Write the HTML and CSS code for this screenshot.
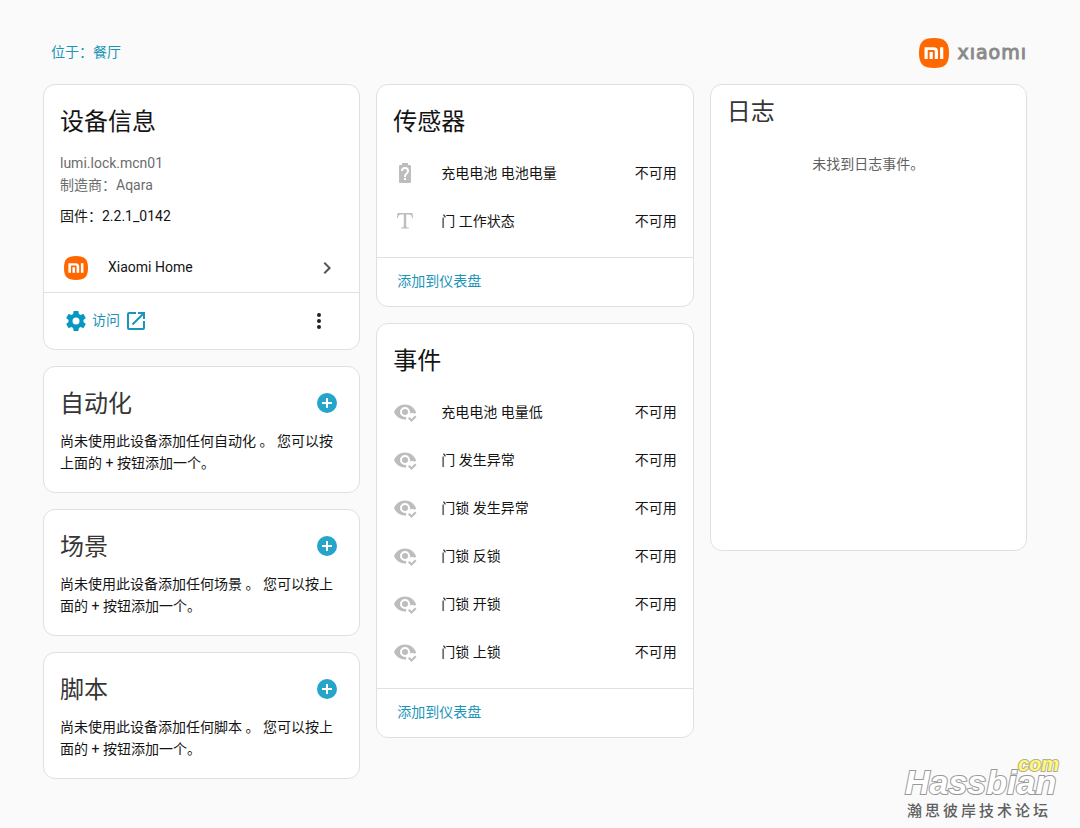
FILE: index.html
```html
<!DOCTYPE html>
<html lang="zh-CN">
<head>
  <meta charset="UTF-8" />
  <meta name="viewport" content="width=device-width, initial-scale=1.0"/>
  <title>设备信息</title>
  <link rel="stylesheet" href="styles.css">
</head>
<body>
  <!-- shared icons -->
  <svg class="sprite" aria-hidden="true">
    <symbol id="mi" viewBox="0 0 30 30">
      <path fill="#ff6700" d="M15 0C4 0 0 4 0 15s4 15 15 15 15-4 15-15S26 0 15 0z"/>
      <path fill="#fff" d="M5.500 9.200h9c3 0 4.500 1.500 4.500 4.300v7.500h-3.200v-7.300c0-1.200-.5-1.800-1.800-1.800H8.700v9.100H5.500zM10.600 14h3.200v7h-3.200zM21.100 9.200h3.200V21h-3.200z"/>
    </symbol>
    <symbol id="plus" viewBox="0 0 24 24">
      <path d="M17 13h-4v4h-2v-4H7v-2h4V7h2v4h4m-5-9A10 10 0 0 0 2 12a10 10 0 0 0 10 10 10 10 0 0 0 10-10A10 10 0 0 0 12 2z"/>
    </symbol>
    <symbol id="eye-check" viewBox="0 0 24 24">
      <path d="M23.500 17l-5 5-3.500-3.500 1.500-1.500 2 2 3.500-3.500 1.500 1.500M12 9a3 3 0 0 1 3 3 3 3 0 0 1-3 3 3 3 0 0 1-3-3 3 3 0 0 1 3-3m0 8c.5 0 .97-.07 1.420-.21-.27.710-.42 1.430-.42 2.210v.45l-1 .05c-5 0-9.270-3.110-11-7.500C2.730 7.610 7 4.500 12 4.500s9.270 3.110 11 7.500c-.25.640-.56 1.260-.92 1.850-.9-.54-1.960-.85-3.080-.85-.78 0-1.500.15-2.210.420.140-.45.210-.92.210-1.420a5 5 0 0 0-5-5 5 5 0 0 0-5 5 5 5 0 0 0 5 5z"/>
    </symbol>
  </svg>

  <div class="page">
    <header class="header">
      <a class="area" href="#">位于：餐厅</a>
      <div class="brand">
        <svg class="brand-mark"><use href="#mi"/></svg>
        <span class="brand-name" aria-label="xiaomi">xıaomı</span>
      </div>
    </header>

    <main class="columns">
      <div class="column">
        <section class="card">
          <h1 class="title">设备信息</h1>
          <div class="info">
            <div>lumi.lock.mcn01</div>
            <div>制造商：Aqara</div>
            <div class="firmware">固件：2.2.1_0142</div>
          </div>
          <a class="integration" href="#">
            <svg class="icon"><use href="#mi"/></svg>
            <span>Xiaomi Home</span>
            <svg class="icon chevron" viewBox="0 0 24 24"><path d="M8.590 16.580L13.170 12 8.590 7.410 10 6l6 6-6 6-1.410-1.420z"/></svg>
          </a>
          <div class="actions">
            <a class="visit" href="#">
              <svg class="icon gear" viewBox="0 0 24 24"><path d="M12 15.500A3.500 3.500 0 0 1 8.500 12 3.500 3.500 0 0 1 12 8.500a3.500 3.500 0 0 1 3.500 3.500 3.500 3.500 0 0 1-3.500 3.500m7.430-2.530c.04-.32.07-.64.07-.97s-.03-.66-.07-1l2.110-1.630c.19-.15.24-.42.12-.64l-2-3.460c-.12-.22-.39-.31-.61-.22l-2.490 1c-.52-.39-1.060-.73-1.690-.98l-.37-2.650A.506.506 0 0 0 14 2h-4c-.25 0-.46.18-.5.42l-.37 2.650c-.63.25-1.170.59-1.690.98l-2.490-1c-.22-.09-.49 0-.61.22l-2 3.460c-.13.22-.07.49.12.64L4.570 11c-.04.34-.07.67-.07 1s.03.65.07.97l-2.110 1.660c-.19.15-.25.42-.12.64l2 3.460c.12.22.39.3.61.22l2.490-1.010c.52.4 1.060.74 1.690.99l.37 2.650c.04.24.25.42.5.42h4c.25 0 .46-.18.5-.42l.37-2.650c.63-.26 1.170-.59 1.690-.99l2.490 1.010c.22.08.49 0 .61-.22l2-3.460c.12-.22.07-.49-.12-.64l-2.110-1.660z"/></svg>
              <span>访问</span>
              <svg class="icon" viewBox="0 0 24 24"><path d="M14 3v2h3.590l-9.830 9.830 1.410 1.410L19 6.410V10h2V3m-2 16H5V5h7V3H5a2 2 0 0 0-2 2v14a2 2 0 0 0 2 2h14a2 2 0 0 0 2-2v-7h-2v7z"/></svg>
            </a>
            <button class="menu" aria-label="更多">
              <svg class="icon" viewBox="0 0 24 24"><path d="M12 16a2 2 0 1 1 0 4 2 2 0 0 1 0-4m0-6a2 2 0 1 1 0 4 2 2 0 0 1 0-4m0-6a2 2 0 1 1 0 4 2 2 0 0 1 0-4z"/></svg>
            </button>
          </div>
        </section>

        <section class="card">
          <div class="title-row">
            <h1 class="title soft">自动化</h1>
            <button class="add" aria-label="添加自动化"><svg class="icon"><use href="#plus"/></svg></button>
          </div>
          <p class="hint">尚未使用此设备添加任何自动化 。 您可以按上面的 + 按钮添加一个。</p>
        </section>

        <section class="card">
          <div class="title-row">
            <h1 class="title soft">场景</h1>
            <button class="add" aria-label="添加场景"><svg class="icon"><use href="#plus"/></svg></button>
          </div>
          <p class="hint">尚未使用此设备添加任何场景 。 您可以按上面的 + 按钮添加一个。</p>
        </section>

        <section class="card">
          <div class="title-row">
            <h1 class="title soft">脚本</h1>
            <button class="add" aria-label="添加脚本"><svg class="icon"><use href="#plus"/></svg></button>
          </div>
          <p class="hint">尚未使用此设备添加任何脚本 。 您可以按上面的 + 按钮添加一个。</p>
        </section>
      </div>

      <div class="column">
        <section class="card">
          <h1 class="title">传感器</h1>
          <ul class="entities">
            <li>
              <svg class="icon" viewBox="0 0 24 24"><path d="M15.070 12.250l-.9.920C13.450 13.890 13 14.500 13 16h-2v-.5c0-1.110.45-2.110 1.170-2.830l1.240-1.260c.37-.36.590-.86.590-1.410a2 2 0 0 0-4 0H8a4 4 0 0 1 8 0c0 .88-.36 1.670-.93 2.250M13 19h-2v-2h2M16.670 4H15V2H9v2H7.330A1.330 1.330 0 0 0 6 5.330v15.340C6 21.400 6.600 22 7.330 22h9.340A1.330 1.330 0 0 0 18 20.670V5.330C18 4.600 17.400 4 16.670 4z"/></svg>
              <span class="name">充电电池 电池电量</span>
              <span>不可用</span>
            </li>
            <li>
              <svg class="icon" viewBox="0 0 24 24"><path d="M5 4h14.500l.5 5h-1c-.3-2.600-1-3.600-3-3.600h-2.800v11.400c0 1.400.5 1.700 2.800 1.900v.9H8v-.9c2.300-.2 2.800-.5 2.800-1.900V5.400H8C6 5.400 5.300 6.400 5 9H4l.5-5z"/></svg>
              <span class="name">门 工作状态</span>
              <span>不可用</span>
            </li>
          </ul>
          <div class="card-footer"><a href="#">添加到仪表盘</a></div>
        </section>

        <section class="card">
          <h1 class="title">事件</h1>
          <ul class="entities">
            <li>
              <svg class="icon"><use href="#eye-check"/></svg>
              <span class="name">充电电池 电量低</span>
              <span>不可用</span>
            </li>
            <li>
              <svg class="icon"><use href="#eye-check"/></svg>
              <span class="name">门 发生异常</span>
              <span>不可用</span>
            </li>
            <li>
              <svg class="icon"><use href="#eye-check"/></svg>
              <span class="name">门锁 发生异常</span>
              <span>不可用</span>
            </li>
            <li>
              <svg class="icon"><use href="#eye-check"/></svg>
              <span class="name">门锁 反锁</span>
              <span>不可用</span>
            </li>
            <li>
              <svg class="icon"><use href="#eye-check"/></svg>
              <span class="name">门锁 开锁</span>
              <span>不可用</span>
            </li>
            <li>
              <svg class="icon"><use href="#eye-check"/></svg>
              <span class="name">门锁 上锁</span>
              <span>不可用</span>
            </li>
          </ul>
          <div class="card-footer"><a href="#">添加到仪表盘</a></div>
        </section>
      </div>

      <div class="column">
        <section class="card log">
          <h1 class="title soft">日志</h1>
          <div class="log-body">未找到日志事件。</div>
        </section>
      </div>
    </main>
  </div>

  <div class="watermark">
    <span class="wm-com">com</span>
    <div class="wm-name">Hassbian</div>
    <div class="wm-sub">瀚思彼岸技术论坛</div>
  </div>
</body>
</html>
```
FILE: styles.css
```css
* {
  box-sizing: border-box;
}
body {
  margin: 0;
  font-family: Roboto, 'Noto Sans CJK SC', sans-serif;
  font-size: 14px;
  line-height: 22px;
  color: #141414;
  background: #fafafa;
  position: relative;
  min-height: 100vh;
}

a {
  color: #1a94b8;
  text-decoration: none;
}

button {
  border: none;
  background: none;
  padding: 0;
  cursor: pointer;
}

.sprite {
  display: none;
}

.icon {
  display: block;
  flex: none;
  width: 24px;
  height: 24px;
  fill: currentColor;
}

.page {
  padding: 38px 53px 48px 43px;
}

.header {
  display: flex;
  align-items: center;
  justify-content: space-between;
  margin-bottom: 16px;
  padding-left: 8px;
}

.area {
  padding-bottom: 2px;
}

.brand {
  display: flex;
  align-items: center;
  gap: 8px;
}

.brand-mark {
  width: 30px;
  height: 30px;
}

.brand-name {
  font-family: 'DejaVu Sans', sans-serif;
  font-size: 19px;
  letter-spacing: 1px;
  color: #8a8a8a;
  -webkit-text-stroke: 1px #8a8a8a;
  padding-bottom: 2px;
}

.columns {
  display: grid;
  grid-template-columns: repeat(3, 1fr);
  gap: 16px;
  align-items: start;
}

.column {
  display: grid;
  gap: 16px;
}

.card {
  background: #fff;
  border: 1px solid #e0e0e0;
  border-radius: 12px;
  padding-top: 13px;
}

.title {
  margin: 0;
  padding: 0 16px;
  font-size: 24px;
  font-weight: 400;
  line-height: 48px;
}

.title.soft {
  color: #363636;
}

.title-row {
  display: flex;
  align-items: center;
  justify-content: space-between;
  padding-right: 20px;
}

.title-row .icon {
  margin-bottom: 2px;
}

.add {
  color: #26a5ca;
}

.hint {
  margin: 0;
  padding: 2px 24px 18px 16px;
}

/* device info */
.info {
  padding: 6px 16px 17px;
  color: #6c6c6c;
}

.firmware {
  margin-top: 9px;
  color: #141414;
}

.integration {
  display: flex;
  align-items: center;
  gap: 20px;
  height: 48px;
  padding: 0 20px;
  color: #141414;
}

.integration span,
.visit span {
  padding-bottom: 2px;
}

.chevron {
  margin-left: auto;
  color: #555;
}

.actions {
  display: flex;
  align-items: center;
  justify-content: space-between;
  height: 57px;
  padding: 0 16px 0 20px;
  border-top: 1px solid #e0e0e0;
}

.visit {
  display: flex;
  align-items: center;
  gap: 4px;
}

.gear {
  color: #0598c2;
}

.menu {
  padding: 12px;
  color: #212121;
}

/* entity lists */
.entities {
  list-style: none;
  margin: 0;
  padding: 3px 16px 12px;
}

.entities li {
  display: flex;
  align-items: center;
  height: 48px;
}

.entities .icon {
  color: #bdbdbd;
}

.name {
  flex: 1;
  margin-left: 24px;
}

.card-footer {
  padding: 12px 20px 14px;
  border-top: 1px solid #e0e0e0;
}

/* log */
.log {
  padding: 3px 0 14px;
}

.log-body {
  height: 400px;
  padding-top: 17px;
  text-align: center;
  color: #616161;
}

/* forum watermark over the page corner */
.watermark {
  position: absolute;
  right: 21px;
  bottom: 6px;
  width: 154px;
}

.wm-name {
  font: italic bold 34px/36px 'Liberation Sans', sans-serif;
  color: #fff;
  -webkit-text-stroke: 2px #999;
  paint-order: stroke fill;
}

.wm-com {
  position: absolute;
  right: 0;
  top: -10px;
  font: italic bold 20px/20px 'Liberation Sans', sans-serif;
  color: #fff67a;
  -webkit-text-stroke: 2px #b0b08a;
  paint-order: stroke fill;
}

.wm-sub {
  font-size: 15px;
  font-weight: 500;
  letter-spacing: 3px;
  color: #606060;
  padding-left: 2px;
  white-space: nowrap;
}
```
